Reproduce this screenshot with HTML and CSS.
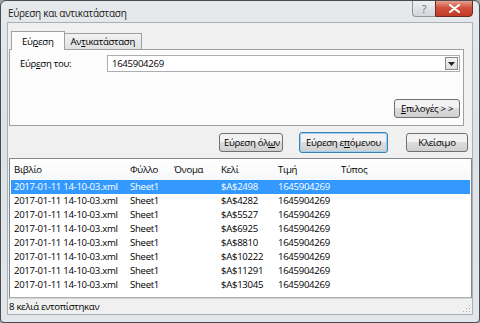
FILE: index.html
```html
<!DOCTYPE html>
<html lang="el">

<head>
    <meta charset="UTF-8">
    <title>Εύρεση και αντικατάσταση</title>
    <link rel="stylesheet" href="styles.css">
</head>

<body>
    <div class="window">
        <div class="titlebar">
            <span class="title">Εύρεση και αντικατάσταση</span>
            <div class="caption-buttons">
                <div class="cap-help">?</div>
                <div class="cap-close">
                    <svg width="11" height="9" viewBox="0 0 11 9">
                        <path d="M1 1 L10 8 M10 1 L1 8" stroke="#fff" stroke-width="2.2" stroke-linecap="round" />
                    </svg>
                </div>
            </div>
        </div>

        <div class="client">
            <div class="tabs">
                <div class="tab active">Εύ<u>ρ</u>εση</div>
                <div class="tab">Αν<u>τ</u>ικατάσταση</div>
            </div>
            <div class="tab-panel">
                <div class="find-row">
                    <label>Εύρ<u>ε</u>ση του:</label>
                    <div class="combo">
                        <span>1645904269</span>
                        <div class="combo-arrow">
                            <svg width="7" height="4" viewBox="0 0 7 4">
                                <path d="M0 0 H7 L3.5 4 Z" fill="#222" />
                            </svg>
                        </div>
                    </div>
                </div>
                <div class="options-row">
                    <button class="btn"><u>Ε</u>πιλογές &gt; &gt;</button>
                </div>
            </div>

            <div class="actions">
                <button class="btn btn-all">Εύρεση όλ<u>ω</u>ν</button>
                <button class="btn btn-next">Εύρεση ε<u>π</u>όμενου</button>
                <button class="btn btn-close">Κλείσιμο</button>
            </div>

            <div class="results">
                <div class="row head">
                    <span class="c-book">Βιβλίο</span>
                    <span class="c-sheet">Φύλλο</span>
                    <span class="c-name">Όνομα</span>
                    <span class="c-cell">Κελί</span>
                    <span class="c-value">Τιμή</span>
                    <span class="c-type">Τύπος</span>
                </div>
                <div id="rows"></div>
            </div>

            <div class="status">
                <span>8 κελιά εντοπίστηκαν</span>
                <svg class="grip" width="9" height="9" viewBox="0 0 9 9">
                    <g fill="#a8acb0">
                        <rect x="7" y="1" width="1" height="1" />
                        <rect x="4" y="4" width="1" height="1" />
                        <rect x="7" y="4" width="1" height="1" />
                        <rect x="1" y="7" width="1" height="1" />
                        <rect x="4" y="7" width="1" height="1" />
                        <rect x="7" y="7" width="1" height="1" />
                    </g>
                </svg>
            </div>
        </div>
    </div>

    <script>
        const cells = ["$A$2498", "$A$4282", "$A$5527", "$A$6925", "$A$8810", "$A$10222", "$A$11291", "$A$13045"];
        const rowsBox = document.getElementById("rows");

        cells.forEach((cell, i) => {
            let row = document.createElement("div");
            row.className = i === 0 ? "row selected" : "row";
            row.innerHTML = `
                <span class="c-book">2017-01-11 14-10-03.xml</span>
                <span class="c-sheet">Sheet1</span>
                <span class="c-name"></span>
                <span class="c-cell">${cell}</span>
                <span class="c-value">1645904269</span>
                <span class="c-type"></span>
            `;
            rowsBox.appendChild(row);
        });
    </script>
</body>

</html>
```

FILE: styles.css
```css
body {
    margin: 0;
    padding: 0;
    background-color: #9fa4a8;
    font-family: "Open Sans", "Noto Sans", sans-serif;
    font-size: 9.6px;
    letter-spacing: -0.3px;
    color: #000;
}

u {
    text-decoration: underline;
}

.window {
    width: 480px;
    height: 323px;
    box-sizing: border-box;
    border: 1px solid #4a4d50;
    border-radius: 6px 6px 4px 4px;
    background: linear-gradient(to bottom, #e6e9ec, #dde2e6 40%, #e2e6ea);
    padding: 0 6px 7px 6px;
    display: flex;
    flex-direction: column;
    overflow: hidden;
}

.titlebar {
    height: 23px;
    display: flex;
    align-items: flex-start;
    justify-content: space-between;
}

.title {
    font-size: 10px;
    margin-top: 5px;
    margin-left: 1px;
    color: #1a1a1a;
}

.caption-buttons {
    display: flex;
    margin-right: 0;
    margin-top: -1px;
}

.cap-help {
    width: 23px;
    height: 17px;
    box-sizing: border-box;
    border: 1px solid #8f969c;
    border-right: none;
    border-radius: 0 0 0 4px;
    background: linear-gradient(to bottom, #eef0f2, #d2d7db);
    color: #6e7478;
    font-size: 11px;
    text-align: center;
    line-height: 15px;
}

.cap-close {
    width: 38px;
    height: 17px;
    box-sizing: border-box;
    border: 1px solid #6b2a22;
    border-radius: 0 0 4px 0;
    background: linear-gradient(to bottom, #e8a091, #d0513c 45%, #c23b26);
    display: flex;
    align-items: center;
    justify-content: center;
}

.client {
    flex: 1;
    background-color: #f0f0f0;
    border: 1px solid #a9b0b6;
    display: flex;
    flex-direction: column;
    padding: 0;
}

.tabs {
    display: flex;
    align-items: flex-end;
    margin: 8px 0 0 3px;
    height: 18px;
    position: relative;
    z-index: 1;
}

.tab {
    height: 15px;
    padding: 0 6px;
    border: 1px solid #a0a0a0;
    border-bottom: none;
    background: linear-gradient(to bottom, #f2f2f2, #e0e0e0);
    line-height: 16px;
}

.tab.active {
    height: 18px;
    background: #fcfcfc;
    padding: 0 10px;
    margin-bottom: -1px;
    line-height: 19px;
}

.tab + .tab {
    border-left: none;
}

.tab-panel {
    margin: 0 8px 0 1px;
    height: 77px;
    box-sizing: border-box;
    border: 1px solid #a0a0a0;
    background: #fcfcfc;
    display: flex;
    flex-direction: column;
    padding: 5px 3px 0 10px;
}

.find-row {
    display: flex;
    align-items: center;
}

.find-row label {
    width: 87px;
}

.combo {
    flex: 1;
    height: 17px;
    box-sizing: border-box;
    border: 1px solid #abadb3;
    background: #fff;
    display: flex;
    align-items: center;
    justify-content: space-between;
    padding-left: 4px;
}

.combo-arrow {
    width: 13px;
    height: 13px;
    box-sizing: border-box;
    margin-right: 1px;
    border: 1px solid #8a8a8a;
    background: linear-gradient(to bottom, #f4f4f4, #dcdcdc);
    display: flex;
    align-items: center;
    justify-content: center;
}

.options-row {
    display: flex;
    justify-content: flex-end;
    margin-top: 27px;
}

.btn {
    font-family: "Open Sans", "Noto Sans", sans-serif;
    font-size: 9.6px;
    letter-spacing: -0.3px;
    height: 19px;
    padding: 0 4px;
    border: 1px solid #707070;
    border-radius: 3px;
    background: linear-gradient(to bottom, #f2f2f2 50%, #dddddd 50%, #cfcfcf);
    color: #000;
    line-height: 16px;
    white-space: nowrap;
}

.options-row .btn {
    width: 66px;
    margin-right: 0;
}

.actions {
    display: flex;
    justify-content: flex-end;
    align-items: center;
    margin: 6px 4px 0 0;
    height: 21px;
}

.btn-all {
    width: 64px;
    margin-right: 16px;
}

.btn-next {
    width: 89px;
    height: 21px;
    border-color: #3c7fb1;
    box-shadow: inset 0 0 0 1px #9bd3f5;
    margin-right: 18px;
}

.btn-close {
    width: 62px;
}

.results {
    margin: 5px 0 0 1px;
    height: 140px;
    box-sizing: border-box;
    border: 1px solid #828790;
    border-bottom-color: #a9b0b6;
    background: #fff;
    padding: 0 1px;
}

.row {
    display: flex;
    height: 14px;
    line-height: 14px;
    padding-left: 3px;
    white-space: nowrap;
}

.row.head {
    height: 21px;
    line-height: 22px;
    margin-bottom: 0;
    background: linear-gradient(to bottom, #ffffff, #f7f8f9);
}

.row.selected {
    background-color: #3399ff;
    color: #fff;
}

.c-book {
    width: 116px;
}

.c-sheet {
    width: 44px;
}

.c-name {
    width: 47px;
}

.c-cell {
    width: 57px;
}

.c-value {
    width: 63px;
}

.c-type {
    flex: 1;
}

.status {
    height: 15px;
    line-height: 15px;
    padding-left: 1px;
    border-top: 1px solid #d5d5d5;
    background: #f0f0f0;
    display: flex;
    justify-content: space-between;
    align-items: flex-end;
}

.grip {
    margin: 0 1px 1px 0;
}
```
